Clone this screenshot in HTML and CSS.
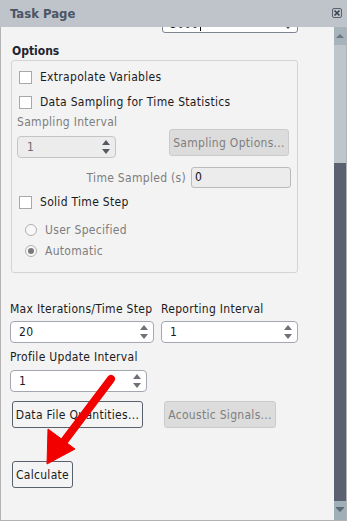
FILE: index.html
```html
<!DOCTYPE html>
<html>
<head>
<meta charset="utf-8">
<link rel="stylesheet" href="styles.css">
</head>
<body>
<div class="panel">
  <div class="titlebar">
    <span class="title">Task Page</span>
    <svg class="close" width="10" height="10" viewBox="0 0 10 10"><rect x="0.5" y="0.5" width="9" height="9" rx="1.5" fill="none" stroke="#5a6270"/><path d="M2.5 2.5 L7.5 7.5 M7.5 2.5 L2.5 7.5" stroke="#3c4350" stroke-width="1.6"/></svg>
  </div>
  <div class="body">
    <div class="viewport">
      <div class="content">
        <div class="dropdown"><span class="ddtext">3000</span><span class="caret"></span><span class="ddarrow"></span></div>
        <div class="heading">Options</div>
        <div class="group">
          <label class="check row1"><span class="box"></span>Extrapolate Variables</label>
          <label class="check row2"><span class="box"></span>Data Sampling for Time Statistics</label>
          <div class="glabel">Sampling Interval</div>
          <div class="samprow">
            <div class="spin spin-dis s-samp"><span>1</span><span class="arrows"><i class="up"></i><i class="dn"></i></span></div>
            <div class="btn btn-dis b-samp">Sampling Options...</div>
          </div>
          <div class="timerow"><span class="tlabel">Time Sampled (s)</span><div class="tinput">0</div></div>
          <label class="check row3"><span class="box"></span>Solid Time Step</label>
          <div class="radio r1"><span class="rb"></span>User Specified</div>
          <div class="radio r2"><span class="rb on"></span>Automatic</div>
        </div>
        <div class="pair labels"><span>Max Iterations/Time Step</span><span>Reporting Interval</span></div>
        <div class="pair spins">
          <div class="spin"><span>20</span><span class="arrows"><i class="up"></i><i class="dn"></i></span></div>
          <div class="spin"><span>1</span><span class="arrows"><i class="up"></i><i class="dn"></i></span></div>
        </div>
        <div class="plabel">Profile Update Interval</div>
        <div class="spin s-prof"><span>1</span><span class="arrows"><i class="up"></i><i class="dn"></i></span></div>
        <div class="btnrow">
          <div class="btn b-data">Data File Quantities...</div>
          <div class="btn btn-dis b-ac">Acoustic Signals...</div>
        </div>
        <div class="btn b-calc">Calculate</div>
      </div>
    </div>
    <div class="scrollbar">
      <div class="sb-up"><i></i></div>
      <div class="sb-track"></div>
      <div class="sb-thumb"></div>
      <div class="sb-down"><i></i></div>
    </div>
  </div>
  <svg class="redarrow" width="347" height="521" viewBox="0 0 347 521">
    <line x1="111" y1="379" x2="62" y2="444" stroke="#f20000" stroke-width="8" stroke-linecap="round"/>
    <polygon points="47,464 48,429 75,449" fill="#f20000" stroke="#f20000" stroke-width="1" stroke-linejoin="round"/>
  </svg>
</div>
</body>
</html>
```
FILE: styles.css
```css
html, body { margin: 0; padding: 0; }
body {
  width: 347px; height: 521px; overflow: hidden;
  font-family: "DejaVu Sans Condensed", "DejaVu Sans", sans-serif;
  font-stretch: condensed;
  font-size: 12px; letter-spacing: 0.3px; color: #1b1b1b; background: #f3f3f3;
}
.panel { position: relative; width: 347px; height: 521px; display: flex; flex-direction: column; }
.titlebar {
  height: 27px; flex: none; background: #bfc4cb;
  display: flex; align-items: center; justify-content: space-between;
  padding: 0 5px 0 10px; box-sizing: border-box;
}
.title { font-weight: bold; font-size: 13px; letter-spacing: 0; color: #4b5565; }
.close { margin-top: -2px; }
.body {
  flex: 1; display: flex; min-height: 0;
  border: 1px solid #b3b3b3; border-top: none; background: #f3f3f3;
}
.viewport { flex: 1; overflow: hidden; }
.content { margin-top: -16px; }

.dropdown {
  position: relative; margin-left: 161px; width: 136px; height: 22px; box-sizing: border-box;
  border: 1px solid #7e8591; border-radius: 3px; background: #fff;
  padding: 5px 0 0 7px; line-height: 14px; font-size: 12px;
}
.caret { display: inline-block; width: 1px; height: 14px; background: #000; vertical-align: top; margin-left: 1px; }
.ddarrow {
  position: absolute; right: 6px; top: 14px; width: 0; height: 0;
  border-left: 3px solid transparent; border-right: 3px solid transparent; border-top: 3px solid #555;
}
.heading { margin: 9px 0 0 11px; height: 18px; line-height: 18px; font-weight: bold; letter-spacing: 0; color: #1f2530; }

.group {
  margin-left: 10px; width: 287px; height: 213px; box-sizing: border-box;
  border: 1px solid #d4d4d4; border-radius: 3px; padding-top: 6px;
}
.check { display: flex; align-items: center; gap: 8px; height: 20px; padding-left: 7px; }
.box { width: 13px; height: 13px; box-sizing: border-box; border: 1px solid #a8a8a8; background: #fff; }
.row2 { margin-top: 5px; }
.glabel { margin-top: 3px; height: 15px; line-height: 15px; padding-left: 5px; color: #7d7d7d; }
.samprow { display: flex; align-items: flex-start; padding-left: 5px; }
.spin {
  position: relative; height: 22px; box-sizing: border-box;
  border: 1px solid #a3a8b0; border-radius: 4px; background: #fff;
  padding-left: 8px; line-height: 20px;
}
.arrows { position: absolute; right: 5px; top: 3px; width: 8px; height: 14px; }
.arrows i { position: absolute; left: 0; width: 0; height: 0; border-left: 4px solid transparent; border-right: 4px solid transparent; }
.arrows i.up { top: 0; border-bottom: 5px solid #6e7278; }
.arrows i.dn { bottom: 0; border-top: 5px solid #6e7278; }
.spin-dis { background: #ececec; border-color: #c4c4c4; color: #6c6c6c; }
.spin-dis .arrows i.up { border-bottom-color: #555a62; }
.spin-dis .arrows i.dn { border-top-color: #555a62; }
.s-samp { width: 99px; margin-top: 6px; padding-left: 9px; }
.btn {
  height: 27px; box-sizing: border-box; border: 1px solid #5a606c; border-radius: 3px;
  background: #f4f4f4; display: flex; align-items: center; justify-content: center; white-space: nowrap;
}
.btn-dis { background: #dcdcdc; border-color: #cbcbcb; color: #7f7f7f; }
.b-samp { width: 120px; height: 27px; margin-left: 53px; margin-top: -1px; }
.timerow { display: flex; justify-content: flex-end; align-items: center; gap: 5px; margin-top: 9px; padding-right: 6px; }
.tlabel { color: #7d7d7d; }
.tinput {
  width: 100px; height: 21px; box-sizing: border-box; border: 1px solid #bababa; border-radius: 3px;
  background: #ececec; padding-left: 3px; line-height: 19px; color: #111;
}
.row3 { margin-top: 4px; }
.radio { display: flex; align-items: center; gap: 8px; height: 20px; padding-left: 13px; color: #7d7d7d; }
.r1 { margin-top: 8px; }
.r2 { margin-top: 1px; }
.rb {
  position: relative; width: 12px; height: 12px; box-sizing: border-box; border-radius: 50%;
  border: 1px solid #b0b0b0; background: #f8f8f8;
}
.rb.on::after {
  content: ""; position: absolute; left: 2px; top: 2px; width: 6px; height: 6px; border-radius: 50%; background: #7a7a7a;
}

.pair { display: grid; grid-template-columns: 144px 137px; column-gap: 7px; margin-left: 9px; }
.labels { margin-top: 28px; height: 16px; line-height: 16px; white-space: nowrap; }
.spins { margin-top: 4px; }
.plabel { margin: 6px 0 0 9px; height: 16px; line-height: 16px; }
.s-prof { width: 137px; margin: 5px 0 0 9px; }
.btnrow { display: flex; margin: 9px 0 0 11px; gap: 21px; }
.b-data { width: 131px; }
.b-ac { width: 112px; }
.b-calc { width: 61px; margin: 33px 0 0 11px; }

.scrollbar { width: 12px; flex: none; display: flex; flex-direction: column; }
.sb-up { height: 18px; background: #a6b3bb; position: relative; }
.sb-up i { position: absolute; left: 2px; top: 7px; border-left: 4px solid transparent; border-right: 4px solid transparent; border-bottom: 4px solid #6b7784; }
.sb-track { height: 118px; background: #bec5cb; }
.sb-thumb { flex: 1; background: #5b6170; }
.sb-down { height: 19px; background: #9eafb7; position: relative; }
.sb-down i { position: absolute; left: 2px; top: 7px; border-left: 4px solid transparent; border-right: 4px solid transparent; border-top: 4px solid #5f6874; }
.sb-down i::before { content: ""; position: absolute; left: -4px; top: -5px; width: 8px; height: 1px; background: #5f6874; }

.redarrow { position: absolute; left: 0; top: 0; pointer-events: none; }
```
